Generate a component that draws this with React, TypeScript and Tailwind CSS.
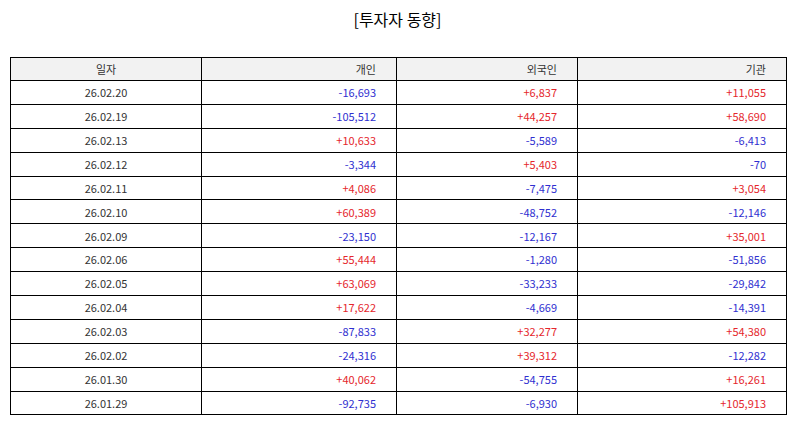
const rows: [string, string, string, string][] = [
  ['26.02.20', '-16,693', '+6,837', '+11,055'],
  ['26.02.19', '-105,512', '+44,257', '+58,690'],
  ['26.02.13', '+10,633', '-5,589', '-6,413'],
  ['26.02.12', '-3,344', '+5,403', '-70'],
  ['26.02.11', '+4,086', '-7,475', '+3,054'],
  ['26.02.10', '+60,389', '-48,752', '-12,146'],
  ['26.02.09', '-23,150', '-12,167', '+35,001'],
  ['26.02.06', '+55,444', '-1,280', '-51,856'],
  ['26.02.05', '+63,069', '-33,233', '-29,842'],
  ['26.02.04', '+17,622', '-4,669', '-14,391'],
  ['26.02.03', '-87,833', '+32,277', '+54,380'],
  ['26.02.02', '-24,316', '+39,312', '-12,282'],
  ['26.01.30', '+40,062', '-54,755', '+16,261'],
  ['26.01.29', '-92,735', '-6,930', '+105,913'],
];

function Num({ v }: { v: string }) {
  const color = v.startsWith('-') ? 'text-[#2f2fd0]' : 'text-[#e5262c]';
  return <td className={`border border-black text-right pr-[20px] ${color}`}>{v}</td>;
}

export default function App() {
  return (
    <div className="w-[795px] h-[425px] bg-white font-['Noto_Sans_CJK_KR',sans-serif] text-[#333]">
      <h1 className="text-center text-[16px] text-black pt-[8px] h-[57px] leading-[22px]">[투자자 동향]</h1>
      <table className="ml-[10px] w-[776px] table-fixed border-collapse text-[11px]">
        <colgroup>
          <col className="w-[191px]" />
          <col className="w-[195px]" />
          <col className="w-[181px]" />
          <col className="w-[209px]" />
        </colgroup>
        <thead>
          <tr className="h-[23px] bg-[#f2f2f2]">
            <th className="border border-black font-normal text-center">일자</th>
            <th className="border border-black font-normal text-right pr-[20px]">개인</th>
            <th className="border border-black font-normal text-right pr-[20px]">외국인</th>
            <th className="border border-black font-normal text-right pr-[20px]">기관</th>
          </tr>
        </thead>
        <tbody>
          {rows.map(r => (
            <tr key={r[0]} className="h-[23.9px]">
              <td className="border border-black text-center">{r[0]}</td>
              <Num v={r[1]} />
              <Num v={r[2]} />
              <Num v={r[3]} />
            </tr>
          ))}
        </tbody>
      </table>
    </div>
  );
}
